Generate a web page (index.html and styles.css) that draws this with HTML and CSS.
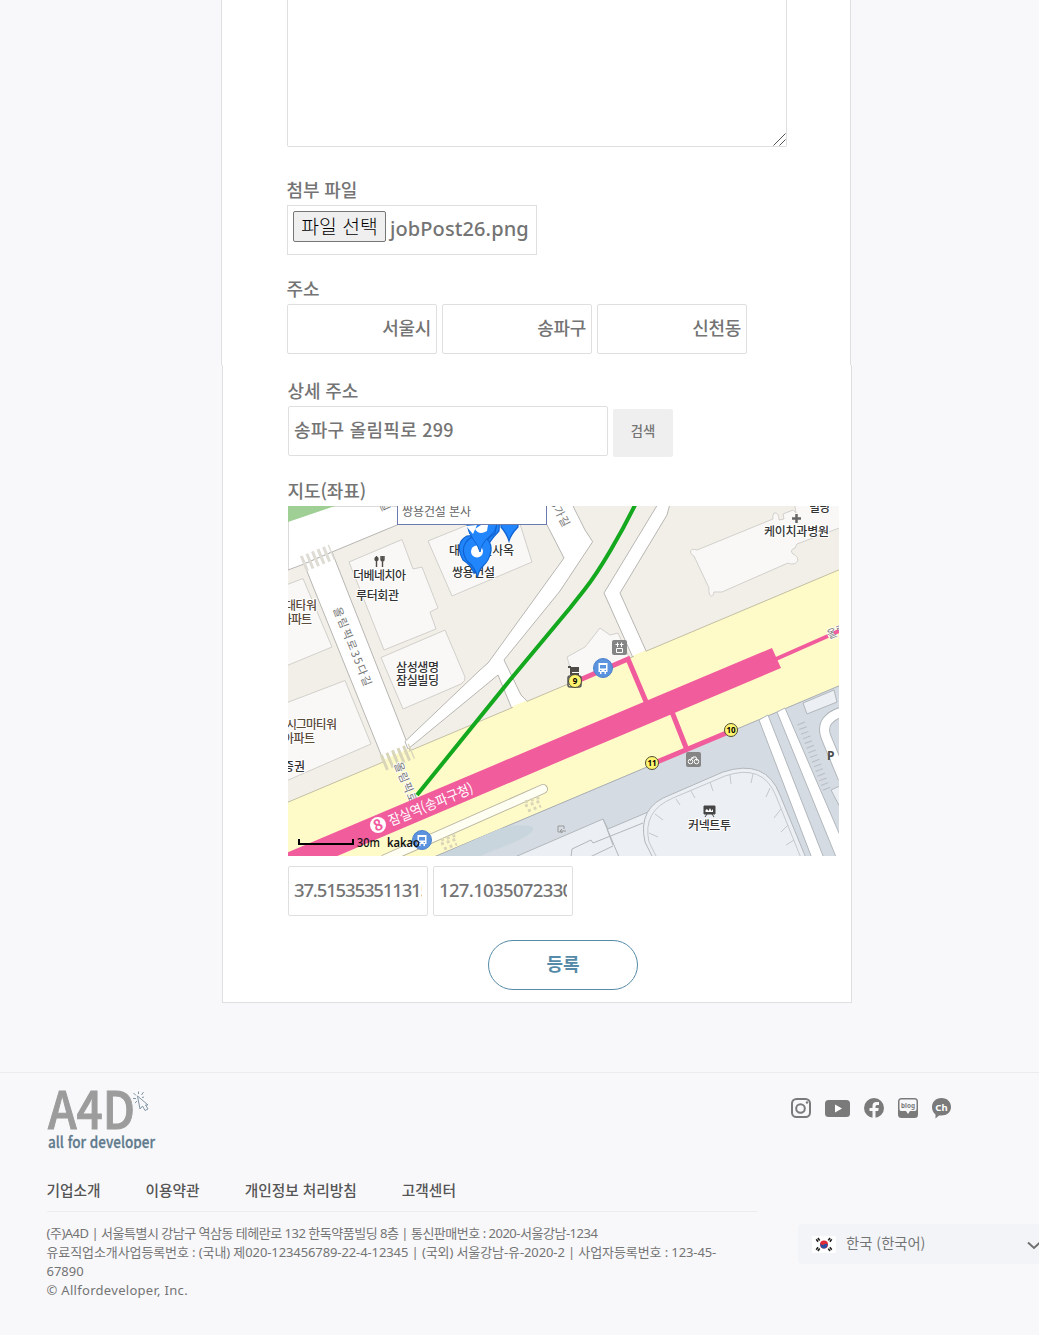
FILE: index.html
```html
<!DOCTYPE html>
<html lang="ko">
<head>
<meta charset="utf-8">
<title>A4D</title>
<link rel="stylesheet" href="styles.css">
</head>
<body>
<div class="page">
<main>
  <section class="panel panel-top">
    <div class="content-wrap">
      <textarea class="box content" aria-label="내용"></textarea>
      <svg class="grip" width="13" height="13" viewBox="0 0 13 13"><path d="M.5 12.500 12.500 .5M6.500 12.500 12.500 6.500" stroke="#555"/></svg>
    </div>
    <label class="label">첨부 파일</label>
    <div class="box file"><button class="file-btn">파일 선택</button><span class="file-name">jobPost26.png</span></div>
    <label class="label">주소</label>
    <div class="row">
      <input class="box region" value="서울시"><input class="box region" value="송파구"><input class="box region" value="신천동">
    </div>
  </section>
  <section class="panel panel-bottom">
    <label class="label">상세 주소</label>
    <div class="row">
      <input class="box detail" value="송파구 올림픽로 299"><button class="search">검색</button>
    </div>
    <label class="label">지도(좌표)</label>
    <svg class="map" viewBox="288 506 551 350" width="551" height="350">
      <rect x="288" y="506" width="551" height="350" fill="#f2efe9"/>
      <path d="M288 506H441L397 525 332 552 304 564 288 570Z" fill="#fff" stroke="#b8b6b2"/>
      <path d="M288 506H335L288 522Z" fill="#9fcf94"/>
      <g fill="#f9f8f6" stroke="#d2d0cb">
        <path d="M349 562 402 539.500 413 569 422 567 438 608 430 612 436 629 384 650Z"/>
        <path d="M381 657.500 445 630 465 677Q466 681 461 684L403 709Z"/>
        <path d="M428 541 477 521 520 524 532 562 452 596Z"/>
        <path d="M286 585 303 578.500 332 647 286 666Z"/>
        <path d="M286 703 345 680.500 371 744 286 781Z"/>
        <path d="M697 550C689 547 689 554 694 556L709 588C708 597 713 599 714 592L722 592 788 563C797 567 802 558 793 554Q789 550 795 548L797 544 842 527V500H794L796 513 793 510 783 514 784 519 779 520Q779 512 774 513 772 516 773 519Z"/>
        <path d="M567 657 585 647 600 628 610 635 618 633 629 657 575 684Z"/>
      </g>
      <g fill="#fff" stroke="#b8b6b2">
        <path d="M304 564 332 552 410 750 384 762Z"/>
        <path d="M534 500H570L573 506 585 530 592.700 541.700 560 591 504 660 521 695 528 702 512 709 498 675 408 749 405 741.500 480 670 488 663 564 558 547 525Z"/>
        <path d="M660 500 656.700 506 604 593 634 660 647 653 620 593 667 515 671 500Z"/>
      </g>
      <path d="M286 803 841 569V686L434 857H286Z" fill="#fffbc9" stroke="#c3bfa3"/>
      <path d="M384 761 409 750M513 708 527 702M634 657 646 652" stroke="#fffbc9" stroke-width="3"/>
      <path d="M434 857 841 685V857Z" fill="#d4dbe2" stroke="#a9afb3"/>
      <path d="M438 856 490 833Q510 823 530 826 541 830 515 842L480 856Z" fill="#c9d5dd"/>
      <g fill="#ecf0f4" stroke="#b2b7bc">
        <path d="M515 857 603 819 608 829 660 807V857Z"/>
        <path d="M603 819 619 857M571 857 572 849 591 840 593 843 643 823M607 829 613 845M590 857 613 846" fill="none"/>
        <path d="M653 858 645 842Q637 807 670 795L723 772Q766 758 780 795L806 858Z"/>
        <path d="M657 858 649 842Q642 811 673 798L725 776Q763 763 776 796L801 858M676 799 680 805M691 791 695 798M710 782 713 791M730 775 731 784M753 774 751 783M770 788 766 797M781 809 774 818M788 825 781 832M794 840 786 845M649 833 658 837M655 814 663 820" fill="none" stroke="#c3c8cc"/>
        <path d="M803 703 834 690 837 702 807 714Z"/>
        <path d="M831 790 842 785V811Z"/>
      </g>
      <g fill="#fff" stroke="#b2b7bc">
        <path d="M759 720 768 715 825 861H813Z"/>
        <path d="M777 712 785 708 842 840V857H836Z"/>
      </g>
      <path d="M845 711Q819 718 826 737L843 778" fill="none" stroke="#b2b7bc" stroke-width="11"/>
      <path d="M845 711Q819 718 826 737L843 778" fill="none" stroke="#fff" stroke-width="9"/>
      <path d="M801 723 827 790" stroke="#b8bdc3" stroke-width="8" stroke-dasharray="1 4"/>
      <path d="M543 789 385 859" stroke="#b9b6a0" stroke-width="10" stroke-linecap="round"/>
      <path d="M543 789 385 859" stroke="#fffef3" stroke-width="8" stroke-linecap="round"/>
      <g stroke="#dfdcd5" stroke-dasharray="3 3" fill="none">
        <path d="M303 564 332 552" stroke-width="16"/>
        <path d="M383 763 412 751" stroke-width="16" stroke="#d9d5b9"/>
        <path d="M525 802 541 797M525 806 541 801M528 811 541 806M441 840 457 835M441 844 457 839M444 849 457 844" stroke-width="3" stroke="#dad6b8"/>
      </g>
      <g class="road-text">
        <text transform="translate(333 609) rotate(68)" textLength="84">올림픽로35다길</text>
        <text transform="translate(394 764) rotate(68)" textLength="43">올림픽로</text>
        <text transform="translate(550 503) rotate(62)" textLength="28">5가길</text>
        <text transform="translate(379 503) rotate(65)">길</text>
        <text transform="translate(829 639) rotate(-23)">올림</text>
      </g>
      <path d="M286 853 570 733 772 648 781 668 570 757 335 857H286Z" fill="#f15c9c"/>
      <g stroke="#f15c9c" stroke-width="5" fill="none">
        <path d="M575 682 628 659 647 704M672 712 687 750M652 764 731 731"/>
        <path d="M776 659 828 636M834 633 839 631" stroke-width="4"/>
      </g>
      <path d="M636 503C622 532 600 570 585 589L570 608 510 680 417 795" fill="none" stroke="#14a81e" stroke-width="4"/>
      <circle cx="378" cy="825" r="8" fill="#fff"/>
      <text class="num" x="378" y="830.500" transform="rotate(-23 378 825)" fill="#f15c9c" font-size="15">8</text>
      <text class="station" transform="translate(391 826) rotate(-22)" textLength="90" lengthAdjust="spacingAndGlyphs">잠실역(송파구청)</text>
      <g class="place">
        <text x="353" y="580" textLength="53">더베네치아</text>
        <text x="356" y="600" textLength="43">루터회관</text>
        <text x="396" y="672" textLength="43">삼성생명</text>
        <text x="396" y="685" textLength="43">잠실빌딩</text>
        <text x="449" y="555" textLength="65">대우건설사옥</text>
        <text x="452" y="577" textLength="43">쌍용건설</text>
        <text x="764" y="536" textLength="65">케이치과병원</text>
        <text x="809" y="512" textLength="21">빌딩</text>
        <text x="688" y="830" textLength="43">커넥트투</text>
        <text x="283" y="771" textLength="22">증권</text>
        <g class="brown">
          <text x="285" y="610" textLength="32">대타워</text>
          <text x="281" y="624" textLength="31">아파트</text>
          <text x="286" y="729" textLength="51">시그마타워</text>
          <text x="283" y="743" textLength="32">아파트</text>
        </g>
      </g>
      <g fill="none" stroke="#504d49" stroke-width="1.400">
        <path d="M376.500 556V567M381 556V559Q381 561 382.500 561T384 559V556M382.500 556V567"/>
        <circle cx="376.500" cy="559" r="1.500" fill="#504d49"/>
        <path d="M796.500 514V523M792 518.500H801" stroke-width="2.500" stroke="#666"/>
        <path d="M558 826V832H563M558 826H564V829M566 831H560M562 829 560 831 562 833" stroke="#999" stroke-width="1"/>
      </g>
      <path d="M568 666H571V667H579V672H572V673H579V675H570V668H568Z" fill="#504d49"/>
      <path d="M704 806H715V814H704ZM705 817 707 814M714 817 712 814" fill="#444" stroke="#444"/>
      <path d="M705.500 812V810L707 809 708.500 811 710 808 711.500 811 713 809V812Z" fill="#fff"/>
      <text x="827" y="760" class="parking">P</text>
      <g fill="#858585">
        <rect x="612" y="640" width="15" height="15" rx="2"/>
        <rect x="686" y="752" width="15" height="15" rx="2"/>
      </g>
      <g fill="none" stroke="#fff" stroke-width="1">
        <path d="M617.500 642.500V647M615.500 644.500H619M621.500 642.500V647M620 644.500H623.500M616.500 648.500H622.500V652.500H616.500Z"/>
        <circle cx="690.500" cy="761.500" r="2.300"/><circle cx="696.500" cy="761.500" r="2.300"/>
        <path d="M690 761 693 757H696L697 761M691 758H694"/>
      </g>
      <g id="bus">
        <circle cx="603" cy="668" r="9.500" fill="#5b93df" stroke="#4e82cc"/>
        <path d="M598.500 663H607.500V672H606V674H604.500V672H601.500V674H600V672H598.500Z" fill="#fff"/>
        <path d="M600 665H606V668.500H600ZM600 670H601.500V671H600ZM604.500 670H606V671H604.500Z" fill="#5b93df"/>
      </g>
      <use href="#bus" x="-181" y="172"/>
      <rect x="568" y="676" width="13" height="11" rx="2" fill="none" stroke="#555" stroke-width="1.500"/>
      <g fill="#fff46e" stroke="#4c4b35">
        <circle cx="575" cy="681" r="6.500"/><circle cx="731" cy="730" r="6.500"/><circle cx="652" cy="763" r="6.500"/>
      </g>
      <g class="exit">
        <text x="575" y="684">9</text><text x="731" y="733">10</text><text x="652" y="766">11</text>
      </g>
      <g fill="#2185fb" stroke="#0f62d0" stroke-width="1.200">
        <path d="M509 541Q507 534 501 527V515H518V527Q511 534 509 541Z"/>
        <path d="M484 553Q480 539 471 532 463 515 479 511 502 511 499 531 489 541 484 553Z"/>
        <path d="M480 552Q477 539 470 533 463 515 479 511 501 511 495 533 484 541 480 552Z"/>
        <path d="M474 573Q471 565 463 560 454 543 467 536 488 533 488 556 477 565 474 573Z"/>
        <path d="M477.500 577Q475 567 467 561 460 551 466 542 472 535 480 536 492 539 491 551 489 561 483 566 479 570 477.500 577Z"/>
      </g>
      <circle cx="477" cy="551.500" r="6" fill="#fff"/>
      <path d="M467 525Q469 534 473 539 478 545 480 552 482 542 490 536 496 531 497 524Z" fill="#2185fb" stroke="#0f62d0"/>
      <path d="M466 526 477 525 473 534ZM475 529Q479 536 487 531L488 525H481Z" fill="#fff"/>
      <rect x="397.500" y="500" width="149" height="24.500" fill="#fff" stroke="#6c7bad"/>
      <text x="402" y="516" class="info" textLength="69">쌍용건설 본사</text>
      <path d="M299 839V844H353V839" fill="none" stroke="#000" stroke-width="2"/>
      <text class="scale" x="357" y="847" textLength="23" lengthAdjust="spacingAndGlyphs">30m</text>
      <text class="kakao" x="387" y="847" textLength="33" lengthAdjust="spacingAndGlyphs">kakao</text>
    </svg>
    <div class="row coords">
      <input class="box coord lat" value="37.5153535113154"><input class="box coord lng" value="127.103507233098">
    </div>
    <button class="submit">등록</button>
  </section>
</main>
<footer>
  <div class="foot-main">
    <svg class="logo" width="120" height="61" viewBox="46 1088 120 61">
      <text class="logo-big" x="48" y="1129" textLength="87" lengthAdjust="spacingAndGlyphs">A4D</text>
      <text class="logo-small" x="48" y="1148" textLength="107" lengthAdjust="spacingAndGlyphs">all for developer</text>
      <g fill="none" stroke="#8095a5">
        <path d="M137.500 1096 140 1109 142.500 1106 145 1110.500 148 1109 145.500 1105H148Z"/>
        <path d="M138.500 1091.500V1094M133.500 1093 136 1095.500M143.500 1092 141.500 1095M133 1098.500H136M135 1103 137 1101M142 1097.500 144 1097"/>
      </g>
    </svg>
    <nav class="links"><a>기업소개</a><a>이용약관</a><a>개인정보 처리방침</a><a>고객센터</a></nav>
    <div class="legal">
      <div class="l1">(주)A4D | 서울특별시 강남구 역삼동 테헤란로 132 한독약품빌딩 8층 | 통신판매번호 : 2020-서울강남-1234</div>
      <div class="l2">유료직업소개사업등록번호 : (국내) 제020-123456789-22-4-12345 | (국외) 서울강남-유-2020-2 | 사업자등록번호 : 123-45-</div>
      <div>67890</div>
      <div class="l4">© Allfordeveloper, Inc.</div>
    </div>
  </div>
  <div class="foot-side">
    <svg class="social" width="162" height="22" viewBox="790 1097 162 22" fill="#7a7a7a">
      <g fill="none" stroke="#7a7a7a" stroke-width="2">
        <rect x="792" y="1099" width="18" height="18" rx="4.500"/><circle cx="800.500" cy="1108.500" r="4.300"/>
      </g>
      <circle cx="807" cy="1102.500" r="1.200"/>
      <rect x="825" y="1100" width="25" height="17" rx="3.500"/>
      <path d="M835 1104.500V1112.500L842 1108.500Z" fill="#fff"/>
      <circle cx="874" cy="1108" r="10"/>
      <path d="M872.500 1118V1111H869.500V1108H872.500V1106Q872.500 1102 876.500 1102H879V1105H877Q875.500 1105 875.500 1106.500V1108H878.700L878.200 1111H875.500V1118Z" fill="#f8f8fb"/>
      <rect x="898" y="1098" width="20" height="20" rx="3.500"/>
      <path d="M901 1099.500H915Q916.500 1099.500 916.500 1101V1109Q916.500 1111 915 1111H910L908 1114 906 1111H901Q899.500 1111 899.500 1109V1101Q899.500 1099.500 901 1099.500Z" fill="#f8f8fb"/>
      <text x="908" y="1108" class="blog" textLength="14" lengthAdjust="spacingAndGlyphs">blog</text>
      <path d="M941.500 1098C947.500 1098 951 1102 951 1107S947 1115.500 941 1115.500H939L935.500 1118.500V1114.500Q932 1112 932 1107C932 1102 935.500 1098 941.500 1098Z"/>
      <text x="941.500" y="1110.500" class="ch">Ch</text>
    </svg>
    <div class="lang">
      <svg width="24" height="17" viewBox="0 0 24 17">
        <rect width="24" height="17" fill="#fff"/>
        <circle cx="12" cy="8.500" r="4" fill="#e22a35"/>
        <path d="M8.300 7Q10 10 12 8.500T15.700 8.500Q15 12.500 12 12.500 8 12.500 8.300 7Z" fill="#2a50a3"/>
        <path d="M4.500 5 7.500 2.700M16.500 2.700 19.500 5M4.500 12 7.500 14.300M16.500 14.300 19.500 12" stroke="#222" stroke-width="3" stroke-dasharray="1.600 .5"/>
      </svg>
      <span>한국 (한국어)</span>
      <svg class="chev" width="14" height="9" viewBox="0 0 14 9"><path d="M1 1.500 7 7 13 1.500" fill="none" stroke="#707070" stroke-width="2"/></svg>
    </div>
  </div>
</footer>
</div>
</body>
</html>
```

FILE: styles.css
```css
* { box-sizing: border-box; }
body {
  margin: 0;
  background: #fff;
  font-family: "Noto Sans", "Noto Sans CJK KR", sans-serif;
  color: #747474;
}
button, input, textarea { font: inherit; color: inherit; margin: 0; }
.page {
  width: 1039px;
  height: 1335px;
  background: #f8f8fb;
  overflow: hidden;
}
main { height: 1072px; }
.panel {
  width: 630px;
  background: #fff;
  border: 1px solid #dfdfe2;
  padding-left: 65px;
  display: flex;
  flex-direction: column;
  align-items: flex-start;
}
.panel-top { margin-left: 221px; height: 365px; border-width: 0 1px; }
.panel-bottom { margin-left: 222px; height: 638px; border-top: 0; padding-top: 14px; }
.label {
  height: 27px;
  margin-left: -.5px;
  font: 500 18px/23px "Noto Sans CJK KR", sans-serif;
  letter-spacing: -.1px;
}
.box {
  height: 50px;
  background: #fff;
  border: 1px solid #dfdfdf;
  border-radius: 2px;
  padding: 0 5px 3px;
  font-size: 20px;
  font-weight: 500;
  outline: 0;
}
.content-wrap { position: relative; height: 147px; margin-bottom: 31px; }
.content {
  display: block;
  width: 500px;
  height: 147px;
  border-top: 0;
  border-radius: 0 0 2px 2px;
  resize: none;
}
.grip { position: absolute; right: 1px; bottom: 1px; }
.file {
  width: 250px;
  margin-bottom: 22px;
  border-radius: 0;
  padding: 5px;
  display: flex;
  align-items: flex-start;
  white-space: nowrap;
}
.file-btn {
  width: 93px;
  height: 31px;
  padding: 0;
  border: 1px solid #767676;
  border-radius: 2px;
  background: #efefef;
  color: #000;
  font: 300 19.300px/24px "Noto Sans CJK KR", sans-serif;
  padding-bottom: 2px;
}
.file-name { margin-left: 4px; line-height: 35px; letter-spacing: .1px; }
.row { display: flex; gap: 5px; }
.region {
  width: 150px;
  padding-bottom: 5px;
  text-align: right;
  font: 500 18px "Noto Sans CJK KR", sans-serif;
  letter-spacing: -.3px;
}
.detail {
  width: 320px;
  margin-bottom: 23px;
  padding-bottom: 5px;
  font-size: 18px;
  font-family: "Noto Sans CJK KR", sans-serif;
  letter-spacing: .25px;
}
.search {
  width: 60px;
  height: 48px;
  margin-top: 3px;
  padding: 0 0 5px;
  border: 0;
  border-radius: 2px;
  background: #efefef;
  font: 500 13.300px "Noto Sans CJK KR", sans-serif;
}
.map { display: block; font-family: "Noto Sans CJK KR", sans-serif; }
.coords { margin: 10px 0 24px; }
.coord { width: 140px; font-size: 18.500px; }
.lat { letter-spacing: -1.150px; }
.lng { letter-spacing: -.650px; }
.submit {
  width: 150px;
  height: 50px;
  margin-left: 200px;
  padding: 0 0 4px;
  border: 1px solid #558ba8;
  border-radius: 25px;
  background: #fff;
  color: #558ba8;
  font: 700 18px "Noto Sans CJK KR", sans-serif;
}

.road-text { font-size: 11px; fill: #777; stroke: #fff; stroke-width: 1.500px; paint-order: stroke; }
.num { font-weight: 700; text-anchor: middle; }
.station { font-size: 14px; fill: #fff; }
.place { font-size: 12px; font-weight: 500; fill: #333; stroke: #fff; stroke-width: 2px; paint-order: stroke; }
.brown { fill: #5a4a3c; }
.parking { font: 700 12px "Noto Sans", sans-serif; fill: #4c4c4c; }
.exit { font: 700 8px "Noto Sans", sans-serif; text-anchor: middle; }
.info { font-size: 12px; fill: #666; }
.scale { font: 500 12px "Noto Sans", sans-serif; fill: #111; }
.kakao { font: 600 12px "Noto Sans", sans-serif; fill: #111; }

footer {
  height: 263px;
  border-top: 1px solid #ececee;
  display: flex;
}
.foot-main { width: 711px; flex: none; margin-left: 46.5px; padding-top: 15px; }
.logo { display: block; margin-left: -.5px; overflow: hidden; }
.logo-big { font: 500 52px "Noto Sans CJK KR", sans-serif; fill: #9c9c9c; stroke: #9c9c9c; stroke-width: 1px; }
.logo-small { font: 500 15.500px "Noto Sans CJK KR", sans-serif; fill: #607a8c; stroke: #607a8c; stroke-width: .3px; }
.links {
  display: flex;
  gap: 45px;
  height: 63px;
  padding-top: 29px;
  border-bottom: 1px solid #ececee;
  font: 500 14.700px/24px "Noto Sans CJK KR", sans-serif;
  color: #555;
  white-space: nowrap;
}
.legal { margin-top: 12px; font-size: 13px; line-height: 19px; white-space: nowrap; }
.l1 { letter-spacing: -.490px; }
.l2 { letter-spacing: -.1px; }
.l4 { letter-spacing: .3px; }
.foot-side { flex: none; margin-left: 32.5px; padding-top: 24px; }
.social { display: block; }
.blog { font: 700 7px "Noto Sans", sans-serif; text-anchor: middle; }
.ch { font: 700 9.500px "Noto Sans", sans-serif; text-anchor: middle; fill: #fff; }
.lang {
  width: 260px;
  height: 40px;
  margin: 105px 0 0 8px;
  padding: 0 17px 0 14px;
  border-radius: 4px;
  background: #f3f4f8;
  display: flex;
  align-items: center;
  font: 400 14.300px/20px "Noto Sans CJK KR", sans-serif;
}
.lang span { margin: -3px 0 0 10px; white-space: nowrap; }
.chev { margin-left: auto; margin-top: 2px; }
```
